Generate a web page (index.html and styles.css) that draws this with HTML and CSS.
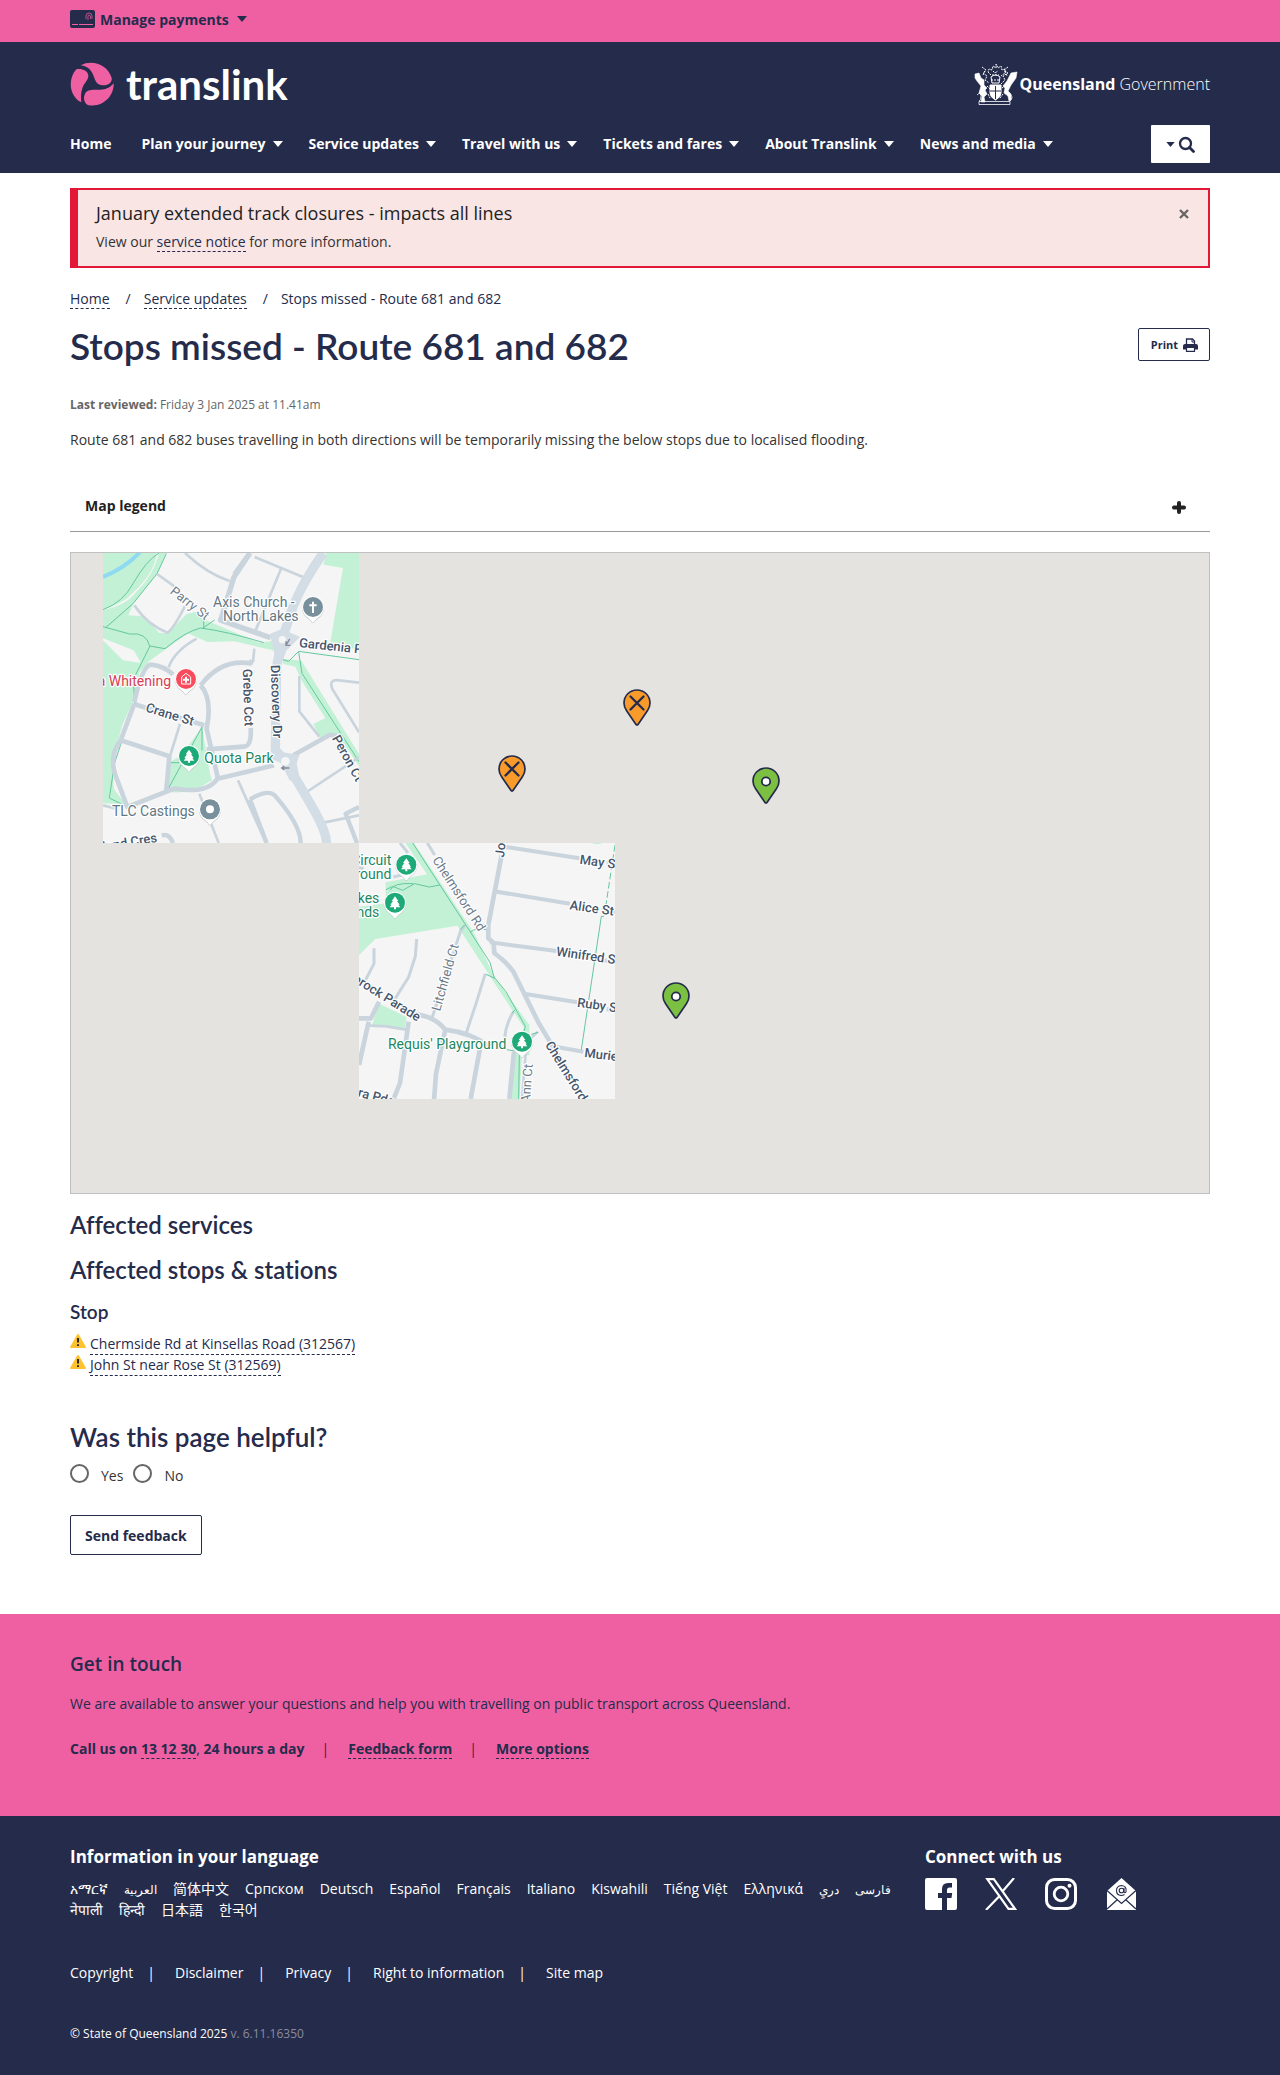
FILE: index.html
```html
<!DOCTYPE html>
<html lang="en">
<head>
<meta charset="utf-8">
<meta name="viewport" content="width=device-width, initial-scale=1">
<title>Stops missed - Route 681 and 682 | Translink</title>
<link rel="stylesheet" href="styles.css">
</head>
<body>
<svg width="0" height="0" class="defs" aria-hidden="true">
  <defs>
    <symbol id="caret" viewBox="0 0 10 6"><path d="M0 0h10L5 6z" fill="currentColor"/></symbol>
    <symbol id="pin-missed" viewBox="0 0 28 37">
      <path d="M14 1C6.800 1 1 6.700 1 14c0 3 1 5.500 2.600 7.700L13 35.400q1 1.200 2 0l9.400-13.700C26 19.500 27 17 27 14 27 6.700 21.200 1 14 1z" fill="#f99b2a" stroke="#252b4b" stroke-width="1.700"/>
      <path d="M7.500 7.500l13 13M20.500 7.500l-13 13" stroke="#252b4b" stroke-width="2.300" stroke-linecap="round"/>
    </symbol>
    <symbol id="pin-stop" viewBox="0 0 28 37">
      <path d="M14 1C6.800 1 1 6.700 1 14c0 3 1 5.500 2.600 7.700L13 35.400q1 1.200 2 0l9.400-13.700C26 19.500 27 17 27 14 27 6.700 21.200 1 14 1z" fill="#7cc042" stroke="#252b4b" stroke-width="1.700"/>
      <circle cx="14" cy="14.500" r="4.200" fill="#fff" stroke="#252b4b" stroke-width="1.800"/>
    </symbol>
    <symbol id="warning" viewBox="0 0 16 14">
      <path d="M8 0q.6 0 1 .7l6.800 12q.5 1.300-.8 1.300H1Q-.3 14 .2 12.700L7 .7Q7.400 0 8 0z" fill="#fdc22d"/>
      <path d="M8 4v4.600M8 10.200v1.900" stroke="#222" stroke-width="1.900"/>
    </symbol>
    <symbol id="poi" viewBox="0 0 70 84"><path d="M35 2C16 2 2 17 2 35c0 17 10 27 22 36q6 4 8 9 3 4 6 0 2-5 8-9c12-9 22-19 22-36C68 17 54 2 35 2z" fill="#b9bdc1" transform="translate(0 2)"/><path d="M35 2C16 2 2 17 2 35c0 17 10 27 22 36q6 4 8 9 3 4 6 0 2-5 8-9c12-9 22-19 22-36C68 17 54 2 35 2z" fill="#fff"/><circle cx="35" cy="35" r="30" fill="currentColor"/></symbol>
    <symbol id="tree" viewBox="0 0 70 84"><use href="#poi" width="70" height="84"/><path d="M35 16l10 14h-4l8 11h-4l6 8H38v6h-6v-6H19l6-8h-4l8-11h-4z" fill="#fff"/></symbol>
  </defs>
</svg>

<div class="topbar">
  <div class="container">
    <button class="payments" type="button">
      <svg width="25" height="18" viewBox="0 0 25 18" aria-hidden="true"><rect width="25" height="18" rx="2" fill="#252b4b"/><path d="M2 14.500h6M9 14.500h14" stroke="#ef60a3" stroke-width="1"/><path d="M16 9V6q0-3 3-3t3 3v3M18 10V6q0-1 1-1t1.500 1v3" fill="none" stroke="#ef60a3" stroke-width=".7"/></svg>
      <span>Manage payments</span>
      <svg class="caret" aria-hidden="true"><use href="#caret"/></svg>
    </button>
  </div>
</div>

<header class="header">
  <div class="container">
    <div class="brand">
      <a class="logo" href="#" aria-label="Translink">
        <svg width="44" height="44" viewBox="12 18 132 132" aria-hidden="true" fill="#ef60a3">
          <path d="M31 40C44 36 65 42 67 58c1 14-12 23-17 36-5 14-6 28-4 45C10 122 4 70 31 40z"/>
          <path d="M44 28C78 10 125 25 137 66c2 12-8 22-24 22-14 0-21-6-26-17C80 53 75 32 44 28z"/>
          <path d="M143 82c2 38-34 75-78 65-11-6-14-22-8-34 5-10 15-12 29-12 16 1 42 2 57-19z"/>
        </svg>
        <span class="wordmark">translink</span>
      </a>
      <a class="government" href="#">
        <svg width="44" height="42" viewBox="0 0 44 42" aria-hidden="true" fill="none" stroke="#fff">
          <path d="M16 22h11v8q0 4-5.500 7Q16 34 16 30z" fill="#fff"/>
          <path d="M21.500 23v13M16 28h11" stroke="#252b4b"/>
          <path d="M1 11l4-1 2 5 3 2v5l3 3-2 2 2 4-3 3 1 5H7l1-6-3-3 2-7-4-5-2-3zM43 9l-6 1-4 8-4 5 2 2-1 5 4 3 1 5 2-1v-6l-3-3 3-6 5-7z" fill="#fff" stroke-width=".6"/>
          <path d="M3 32q4-4 4 1t-2 5M36 31q4 3 0 7M5 38.500h31v3H5z" stroke-width=".8"/>
          <path d="M17 14q4.500-4 9 0l-1 6h-7z" stroke-width="1"/>
          <path d="M17 12l-3-3 1-3 3 1 1-4 3 2 0-4 2 4 3-2 1 4 3-1 0 4-4 3M8 4l4 3-3 3 4 3-2 4 4 3M34 4l-4 3 4 3-5 3 2 4-4 4M19 8l2 2 3-2M17 17h9M18 12h7M11 8l-2 4M31 8l2 5M13 23l3 3M28 25l4-3M14 31l2 4M29 31l-3 4" stroke-width="1" stroke-dasharray="2 1"/>
        </svg>
        <span><b>Queensland</b> Government</span>
      </a>
    </div>
    <nav class="nav" aria-label="Main">
      <ul>
        <li><a href="#">Home</a></li>
        <li><a href="#">Plan your journey <svg class="caret"><use href="#caret"/></svg></a></li>
        <li><a href="#">Service updates <svg class="caret"><use href="#caret"/></svg></a></li>
        <li><a href="#">Travel with us <svg class="caret"><use href="#caret"/></svg></a></li>
        <li><a href="#">Tickets and fares <svg class="caret"><use href="#caret"/></svg></a></li>
        <li><a href="#">About Translink <svg class="caret"><use href="#caret"/></svg></a></li>
        <li><a href="#">News and media <svg class="caret"><use href="#caret"/></svg></a></li>
      </ul>
      <button class="search" type="button" aria-label="Search">
        <svg width="9" height="5" aria-hidden="true"><use href="#caret"/></svg>
        <svg width="18" height="18" viewBox="0 0 18 18" aria-hidden="true"><circle cx="7.500" cy="8.500" r="5.500" fill="none" stroke="currentColor" stroke-width="2.300"/><path d="M11.500 12.500l4 4" stroke="currentColor" stroke-width="2.800" stroke-linecap="round"/></svg>
      </button>
    </nav>
  </div>
</header>

<main class="container main">
  <section class="alert">
    <div>
      <h2>January extended track closures - impacts all lines</h2>
      <p>View our <a href="#">service notice</a> for more information.</p>
    </div>
    <button type="button" aria-label="Close"><svg width="10" height="10" viewBox="0 0 10 10" aria-hidden="true"><path d="M1 1l8 8M9 1L1 9" stroke="#666" stroke-width="2.400"/></svg></button>
  </section>

  <nav aria-label="Breadcrumb">
    <ol class="breadcrumb">
      <li><a href="#">Home</a></li>
      <li><a href="#">Service updates</a></li>
      <li>Stops missed - Route 681 and 682</li>
    </ol>
  </nav>

  <div class="title-row">
    <h1>Stops missed - Route 681 and 682</h1>
    <button class="print" type="button">Print
      <svg width="15" height="14" viewBox="0 0 15 14" aria-hidden="true"><path d="M3.500 7V1h6l2 2v4" fill="none" stroke="currentColor" stroke-width="1.300"/><path d="M9 1v3h3" fill="none" stroke="currentColor"/><path d="M2 6h11q2 0 2 2v3.500h-3V10H3v1.500H0V8q0-2 2-2z" fill="currentColor"/><path d="M3.500 9.500h8v3.800h-8z" fill="#fff" stroke="currentColor" stroke-width="1.200"/></svg>
    </button>
  </div>
  <p class="reviewed"><b>Last reviewed:</b> Friday 3 Jan 2025 at 11.41am</p>
  <p class="intro">Route 681 and 682 buses travelling in both directions will be temporarily missing the below stops due to localised flooding.</p>

  <button class="legend" type="button">Map legend
    <svg width="14" height="16" viewBox="0 0 14 16" aria-hidden="true"><path d="M7 5v9M2 9.500h10" stroke="currentColor" stroke-width="4" stroke-linecap="round"/></svg>
  </button>

  <div class="map">
    <svg class="tile tile-north" viewBox="39 23 768 870" role="img" aria-label="North Lakes street map">
      <rect x="39" y="23" width="768" height="870" fill="#f5f5f5"/>
      <g fill="#c3f1d5">
        <path d="M39 23h190l-28 63-70 88-16 36 48 3 45 50 25 1 57-58 52-12 10 32 155 66 45-6 20 34-140-32-80 2-58-26-115 82-31 36-12 70-40 90-30 110 6 80 36 46-79-5V275l70 70 54 8-22-38-102-40z"/>
        <path d="M39 193q60-25 90-80l70-90H39z"/>
        <path d="M708 23h99v292l-86-25 38-222-58-10z"/>
        <path d="M576 340l58 6 173 280v36L742 566l-50 16-22-46 36-18-70-110-20-44-36-8z"/>
        <path d="M336 545l24 140 6 20q-70 46-137 34l12-90 34-20z"/>
      </g>
      <path d="M200 23q-6 60-70 118-30 36-91 50l0 3q70-14 100-55 50-45 68-116z" fill="#f5f5f5"/>
      <path d="M39 95q70-30 110-74" fill="none" stroke="#8fdaf0" stroke-width="12"/>
      <g fill="none" stroke="#64c79f" stroke-width="3">
        <path d="M39 193q60-22 90-78 40-70 78-92M229 25l-28 60-72 90-82 72M39 244l80 22q50-6 60 36l46 8q60-50 106-62 80 10 190 44M180 302l-50 100 4 70-60 180-16 106 60 30M336 250l38-26M340 215l2 36M232 735l104-190v70M237 652h30M576 342l20 6 30-30 181 25M626 320l10 64 171 265"/>
      </g>
      <g fill="none" stroke="#c9d4dd" stroke-linejoin="round">
        <path d="M480 23l-48 72-40 130 150 52M480 23l-46 64" stroke-width="16"/>
        <path d="M285 23q66 62 134 84M575 66L497 255M494 35l150 62M201 86l70 50M133 180q40 60 100 82 20-16 52-80M320 280q-66 36-84 86" stroke-width="8"/>
        <path d="M133 470q24-110 50-112 40 4 66 30M332 420q60-80 150-66l4-10M332 420q36 40 18 130l34 150M133 475l10 5 200 60M350 612l110-8q26 0 22-56M133 475L92 585q-40 50-10 120l30 80 140-55q100 16 130-30l170-40M92 585l146 48-10 112M610 630l110-62 20 4" stroke-width="14"/>
        <path d="M493 310l-4 40M240 632l30-96M628 392v106l60 76M807 412l-60-7q-32-4-20 26l80 130M650 740l157-104M444 705l84 188M328 745l58 148M39 780l40 10M700 832l107-22" stroke-width="8"/>
        <path d="M480 762q50-30 72-14 80 90 80 145M480 762l50 131M215 870q24-6 34 23M807 785l-40 20 34 88" stroke-width="13"/>
      </g>
      <g fill="none" stroke="#d3dde6" stroke-width="28"><path d="M700 23q-78 110-104 200l-20 60-16 80-4 250 30 35q60 100 88 150 34 60 36 95"/></g>
      <path d="M540 265l36-14 54 24-40 40-24 60-18-70zM552 590l24 30 52 10-8 24 14 70-36-20-24-50-30-14z" fill="#d3dde6"/>
      <circle cx="577" cy="283" r="11" fill="#f5f5f5"/><circle cx="586" cy="648" r="13" fill="#f5f5f5"/>
      <path d="M599 281l-10 17m-1-10v12h13M598 668h-22m7-6l-8 6 8 6" fill="none" stroke="#848a96" stroke-width="4"/>
      <g class="label road">
        <text transform="translate(626 305) rotate(6)">Gardenia P</text>
        <text class="minor" transform="translate(238 142) rotate(38)">Parry St</text>
        <text transform="translate(165 498) rotate(17)">Crane St</text>
        <text transform="translate(458 371) rotate(88)">Grebe Cct</text>
        <text transform="translate(542 359) rotate(88)">Discovery Dr</text>
        <text transform="translate(725 579) rotate(61)">Peron Ct</text>
        <text transform="translate(28 920) rotate(-10)">tland Cres</text>
      </g>
      <g class="label place">
        <text x="369" y="186">Axis Church -</text><text x="399" y="228">North Lakes</text>
        <text x="66" y="813">TLC Castings</text>
        <text class="health" x="243" y="423" text-anchor="end">a Whitening</text>
        <text class="park" x="343" y="654">Quota Park</text>
      </g>
      <use href="#poi" x="634" y="150" width="70" height="84" color="#78909c"/>
      <path d="M669 169v34M658 180h22" stroke="#fff" stroke-width="6"/>
      <use href="#poi" x="253" y="366" width="70" height="84" color="#fa4b5c"/>
      <path d="M275 395l13-11 14 11v21h-27z" fill="none" stroke="#fff" stroke-width="3"/><path d="M288 394v18M279 403h18" stroke="#fff" stroke-width="6"/>
      <use href="#tree" x="262" y="597" width="70" height="84" color="#1eaa78"/>
      <use href="#poi" x="325" y="757" width="70" height="84" color="#78909c"/><circle cx="360" cy="792" r="12" fill="#fff"/>
    </svg>
    <svg class="tile tile-south" viewBox="27 24 768 768" role="img" aria-label="Requis' Playground street map">
      <rect x="27" y="24" width="768" height="768" fill="#f5f5f5"/>
      <g fill="#c3f1d5">
        <path d="M166 24h26l180 270 60 130 106 146v90l-22 6-8 126h-30l14-144 30-70-60-90-140-216-246 40-49 48V215l80-10V142l124-24z"/>
        <path d="M88 506l82 40-6 38-98-14zM730 24h22v3h-22z"/>
      </g>
      <g fill="none" stroke="#c9d4dd" stroke-linejoin="round">
        <path d="M150 24l24 30M27 98l14 2M200 312l-4 52-20 62-50 80M72 340v46l-26 50M345 270l-14 20-84 256M406 416l-28 90-30 90M490 530q-24 40-26 84M232 24l22 36M394 268l18 8M130 126l26-6" stroke-width="9"/>
        <path d="M455 60l-40 210v40l16 14 2 30q40 30 58 58l74 150 90 150M27 550h36l24-50M56 560l-29 130M176 560l-26 184-20 50M190 538q60 2 96 46 80 10 130 50M286 584l-28 132-6 80M390 640l-28 152M492 650l-14 142" stroke-width="14"/>
        <path d="M468 36l220 34M440 170l220 36M420 322l200 26M522 476l160 26M600 632l100 18M770 83h25M755 222l40 8M750 372l30 8M770 522l25 5" stroke-width="12"/>
        <path d="M564 590l-34 30-14 170M60 572l50 2 58 10" stroke-width="8"/>
      </g>
      <g fill="none" stroke="#64c79f" stroke-width="3">
        <path d="M188 24L420 382l12 44 36 44 58 104-10 40M120 166q10-24 70-20M108 164l20-10 30 12 36-20 44 10 32-6M344 270l-14 14M360 292q20-16 48-8M408 418l26 12M486 534l10-10M470 644l24 4M508 660l-2 132M544 598l20-6"/>
        <path d="M762 244h-8l-60 400" /><path d="M795 30l-32 212" stroke-dasharray="20 8"/>
      </g>
      <g class="label road">
        <text transform="translate(462 68) rotate(-84)">Jo</text>
        <text transform="translate(688 86) rotate(8)">May St</text>
        <text transform="translate(658 223) rotate(8)">Alice St</text>
        <text transform="translate(617 362) rotate(8)">Winifred St</text>
        <text transform="translate(680 515) rotate(8)">Ruby St</text>
        <text transform="translate(702 666) rotate(7)">Muriel St</text>
        <text transform="translate(584 629) rotate(58)">Chelmsford</text>
        <text transform="translate(6 438) rotate(32)">brock Parade</text>
        <text transform="translate(22 784) rotate(15)">ra Pde</text>
        <text class="minor" transform="translate(246 75) rotate(57)">Chelmsford Rd</text>
        <text class="minor" transform="translate(270 530) rotate(-74)">Litchfield Ct</text>
        <text class="minor" transform="translate(540 804) rotate(-86)">Ann Ct</text>
      </g>
      <g class="label place">
        <text class="park" x="124" y="90" text-anchor="end">Circuit</text><text class="park" x="124" y="131" text-anchor="end">ground</text>
        <text class="park" x="88" y="204" text-anchor="end">Lakes</text><text class="park" x="88" y="246" text-anchor="end">lands</text>
        <text class="park" x="469" y="642" text-anchor="end">Requis' Playground</text>
      </g>
      <use href="#tree" x="134" y="54" width="70" height="84" color="#1eaa78"/>
      <use href="#tree" x="100" y="168" width="70" height="84" color="#1eaa78"/>
      <use href="#tree" x="481" y="585" width="70" height="84" color="#1eaa78"/>
    </svg>
    <svg class="pin pin-john" role="img" aria-label="Missed stop"><use href="#pin-missed"/></svg>
    <svg class="pin pin-chermside" role="img" aria-label="Missed stop"><use href="#pin-missed"/></svg>
    <svg class="pin pin-east" role="img" aria-label="Open stop"><use href="#pin-stop"/></svg>
    <svg class="pin pin-south" role="img" aria-label="Open stop"><use href="#pin-stop"/></svg>
  </div>

  <section class="affected">
    <h2>Affected services</h2>
    <h2>Affected stops &amp; stations</h2>
    <h3>Stop</h3>
    <ul>
      <li><svg width="16" height="14" aria-hidden="true"><use href="#warning"/></svg><a href="#">Chermside Rd at Kinsellas Road (312567)</a></li>
      <li><svg width="16" height="14" aria-hidden="true"><use href="#warning"/></svg><a href="#">John St near Rose St (312569)</a></li>
    </ul>
  </section>

  <form class="feedback">
    <h2 id="helpful">Was this page helpful?</h2>
    <div class="choices" role="radiogroup" aria-labelledby="helpful">
      <input type="radio" name="helpful" id="yes"><label for="yes">Yes</label>
      <input type="radio" name="helpful" id="no"><label for="no">No</label>
    </div>
    <button type="button">Send feedback</button>
  </form>
</main>

<section class="touch">
  <div class="container">
    <h2>Get in touch</h2>
    <p>We are available to answer your questions and help you with travelling on public transport across Queensland.</p>
    <ul>
      <li><b>Call us on <a href="#">13 12 30</a></b>, <b>24 hours a day</b></li>
      <li><a href="#"><b>Feedback form</b></a></li>
      <li><a href="#"><b>More options</b></a></li>
    </ul>
  </div>
</section>

<footer class="footer">
  <div class="container">
    <div class="columns">
      <section>
        <h2>Information in your language</h2>
        <ul class="languages">
          <li><a href="#" lang="am">አማርኛ</a></li>
          <li><a href="#" lang="ar">العربية</a></li>
          <li><a href="#" lang="zh">简体中文</a></li>
          <li><a href="#" lang="sr">Српском</a></li>
          <li><a href="#" lang="de">Deutsch</a></li>
          <li><a href="#" lang="es">Español</a></li>
          <li><a href="#" lang="fr">Français</a></li>
          <li><a href="#" lang="it">Italiano</a></li>
          <li><a href="#" lang="sw">Kiswahili</a></li>
          <li><a href="#" lang="vi">Tiếng Việt</a></li>
          <li><a href="#" lang="el">Ελληνικά</a></li>
          <li><a href="#" lang="prs">دريِ</a></li>
          <li><a href="#" lang="fa">فارسی</a></li>
          <li><a href="#" lang="ne">नेपाली</a></li>
          <li><a href="#" lang="hi">हिन्दी</a></li>
          <li><a href="#" lang="ja">日本語</a></li>
          <li><a href="#" lang="ko">한국어</a></li>
        </ul>
      </section>
      <section>
        <h2>Connect with us</h2>
        <div class="social">
          <a href="#" aria-label="Facebook"><svg viewBox="0 0 32 32"><path d="M2 0h28q2 0 2 2v28q0 2-2 2h-8V20h4.500l.7-5H22v-3q0-2.500 2.500-2.500H27V5h-4q-6 0-6 6v4h-4v5h4v12H2q-2 0-2-2V2q0-2 2-2z" fill="#fff"/></svg></a>
          <a href="#" aria-label="X"><svg viewBox="0 0 32 32"><path d="M2.300 1.200h6.500L30 30.800h-6.500zM29 0L17 14M14 18.500L1 32" fill="none" stroke="#fff" stroke-width="2.200"/></svg></a>
          <a href="#" aria-label="Instagram"><svg viewBox="0 0 32 32"><rect x="1.500" y="1.500" width="29" height="29" rx="8" fill="none" stroke="#fff" stroke-width="3"/><circle cx="16" cy="16" r="6.800" fill="none" stroke="#fff" stroke-width="2.800"/><circle cx="24.500" cy="7.800" r="2" fill="#fff"/></svg></a>
          <a href="#" aria-label="Email"><svg viewBox="0 0 32 32"><path d="M2 13L16.500 0 31 13v19H2z" fill="#fff"/><path d="M2 12.500l14.500 13L31 12.500M2 31l10.500-9.500M31 31l-10.500-9.500" fill="none" stroke="#252b4b" stroke-width="1.200"/><circle cx="16.500" cy="12.500" r="2.300" fill="none" stroke="#252b4b" stroke-width="1.100"/><path d="M19 10v4q1 1.500 2 0 1-6-4.500-6.500-5 .5-5 5t4.500 5q2 0 3.500-1" fill="none" stroke="#252b4b" stroke-width="1.100"/></svg></a>
        </div>
      </section>
    </div>
    <ul class="legal">
      <li><a href="#">Copyright</a></li>
      <li><a href="#">Disclaimer</a></li>
      <li><a href="#">Privacy</a></li>
      <li><a href="#">Right to information</a></li>
      <li><a href="#">Site map</a></li>
    </ul>
    <p class="copyright">© State of Queensland 2025 <span>v. 6.11.16350</span></p>
  </div>
</footer>
</body>
</html>
```
FILE: styles.css
```css
* { box-sizing: border-box; }
body {
  margin: 0;
  background: #fff;
  color: #333;
  font: 14px/21px "Open Sans", "Noto Sans CJK SC", "Noto Sans CJK KR", sans-serif;
}
h1, h2, h3, p, ul, ol { margin: 0; padding: 0; }
ul, ol { list-style: none; }
a { color: #252b4b; text-decoration: none; }
button { font: inherit; color: inherit; background: none; border: 0; padding: 0; cursor: pointer; }
h1, h2, h3 { color: #252b4b; font-family: Lato, "Open Sans", sans-serif; font-weight: 600; font-variant-ligatures: none; }
svg { display: block; flex: none; }
.defs { position: absolute; }
.container { max-width: 1180px; margin: 0 auto; padding: 0 20px; }
.caret { width: 10px; height: 6px; }

.topbar { background: #ef60a3; color: #252b4b; }
.payments { display: flex; align-items: center; gap: 5px; height: 42px; padding-bottom: 4px; font-weight: 700; }
.payments .caret { margin-left: 3px; }

.header { background: #252b4b; color: #fff; padding: 20px 0 10px; }
.brand { display: flex; justify-content: space-between; align-items: center; margin-bottom: 19px; }
.logo { display: flex; align-items: center; gap: 12px; height: 44px; color: #fff; }
.wordmark { font: 700 42px/44px Lato, sans-serif; }
.government { display: flex; align-items: center; gap: 2px; color: #fff; font-size: 16px; font-weight: 300; }
.government b { font-weight: 700; }
.nav { display: flex; justify-content: space-between; align-items: center; }
.nav ul { display: flex; gap: 26px; }
.nav li:first-child { margin-right: 4px; }
.nav li a { display: flex; align-items: center; gap: 7px; color: #fff; font-weight: 700; padding-bottom: 1px; }
.search { display: flex; align-items: center; justify-content: center; gap: 3px; width: 59px; height: 38px; background: #fff; color: #252b4b; border-radius: 1px; }

.main { padding-top: 15px; padding-bottom: 59px; }
.alert { display: flex; justify-content: space-between; align-items: flex-start; border: 2px solid #e31837; border-left-width: 8px; background: #f8e5e4; padding: 10px 19px 14px 18px; margin-bottom: 20px; }
.alert h2 { font: 400 18px/26px "Open Sans", sans-serif; color: #222; margin-bottom: 5px; }
.alert button { padding-top: 9px; }
.alert p a, .breadcrumb a, .affected a, .touch a { border-bottom: 1px dashed #252b4b; }

.breadcrumb { display: flex; margin-bottom: 16px; }
.breadcrumb li + li::before { content: "/"; padding: 0 13px 0 16px; }
.breadcrumb li { color: #252b4b; }
.title-row { display: flex; justify-content: space-between; align-items: flex-start; margin-bottom: 29px; }
h1 { font-size: 37px; line-height: 42px; }
.print { display: flex; align-items: center; gap: 5px; height: 33px; margin-top: 3px; padding: 0 11px 0 12px; border: 1px solid #252b4b; border-radius: 2px; color: #252b4b; font-size: 11px; font-weight: 700; }
.reviewed { font-size: 12px; line-height: 18px; color: #666; margin-bottom: 15px; }
.legend { display: flex; justify-content: space-between; align-items: center; width: 100%; height: 52px; margin: 30px 0 20px; padding: 0 24px 0 15px; border-bottom: 1px solid #999; color: #222; font-weight: 700; }

.map { position: relative; height: 642px; overflow: hidden; border: 1px solid #bfc1c1; background: #e4e3df; margin-bottom: 16px; }
.tile, .pin { position: absolute; }
.tile-north { left: calc(50% - 537px); top: 0; width: 256px; height: 290px; }
.tile-south { left: calc(50% - 281px); top: 290px; width: 256px; height: 256px; }
.pin { width: 28px; height: 37px; }
.pin-john { left: calc(50% - 17px); top: 136px; }
.pin-chermside { left: calc(50% - 142px); top: 202px; }
.pin-east { left: calc(50% + 112px); top: 214px; }
.pin-south { left: calc(50% + 22px); top: 429px; }
.label { font-family: Roboto, sans-serif; font-size: 42px; paint-order: stroke; stroke: #fff; stroke-width: 7px; stroke-linejoin: round; }
.road { fill: #46566c; font-size: 39px; font-weight: 500; }
.minor { fill: #6d7c89; font-weight: 400; }
.place { fill: #5f7783; }
.health { fill: #d93a52; }
.park { fill: #1c8760; }

.affected h2 { font-size: 24px; line-height: 30px; margin-bottom: 15px; }
.affected h3 { font-size: 19px; line-height: 24px; margin-bottom: 9px; }
.affected li { display: flex; align-items: flex-start; gap: 4px; height: 21px; }
.affected li svg { margin-top: 1px; }
.feedback { margin-top: 45px; }
.feedback h2 { font-size: 26px; line-height: 34px; margin-bottom: 10px; }
.choices { display: flex; margin-bottom: 30px; }
.choices input { appearance: none; width: 19px; height: 19px; margin: 0 12px 0 0; border: 2px solid #666; border-radius: 50%; background: #fff; }
.choices input:checked { background: #252b4b; }
.choices label { padding-top: 1px; height: 21px; margin-right: 10px; }
.feedback button { height: 40px; padding: 0 14px; border: 1px solid #252b4b; border-radius: 2px; color: #252b4b; font-weight: 700; }

.touch { background: #ef60a3; color: #252b4b; padding: 36px 0 57px; }
.touch h2 { font: 600 19px/28px "Open Sans", sans-serif; margin-bottom: 15px; }
.touch p { margin-bottom: 24px; }
.touch ul { display: flex; }
.touch li + li::before { content: "|"; padding: 0 19px 0 17px; }

.footer { background: #252b4b; color: #fff; padding: 29px 0 32px; }
.footer a { color: #fff; }
.footer h2 { font: 700 17px/24px "Open Sans", sans-serif; color: #fff; margin-bottom: 9px; }
.columns { display: grid; grid-template-columns: 825px 1fr; gap: 30px; margin-bottom: 42px; }
.languages { display: flex; flex-wrap: wrap; column-gap: 16px; }
.languages li { height: 21px; }
.languages [lang="ar"], .languages [lang="prs"], .languages [lang="fa"] { font-size: 12px; }
.social { display: flex; gap: 28px; }
.social svg { width: 32px; height: 32px; }
.legal { display: flex; margin-bottom: 42px; }
.legal li + li::before { content: "|"; padding: 0 20px 0 14px; }
.copyright { font-size: 12px; line-height: 18px; }
.copyright span { color: #8a8d9c; }
```
